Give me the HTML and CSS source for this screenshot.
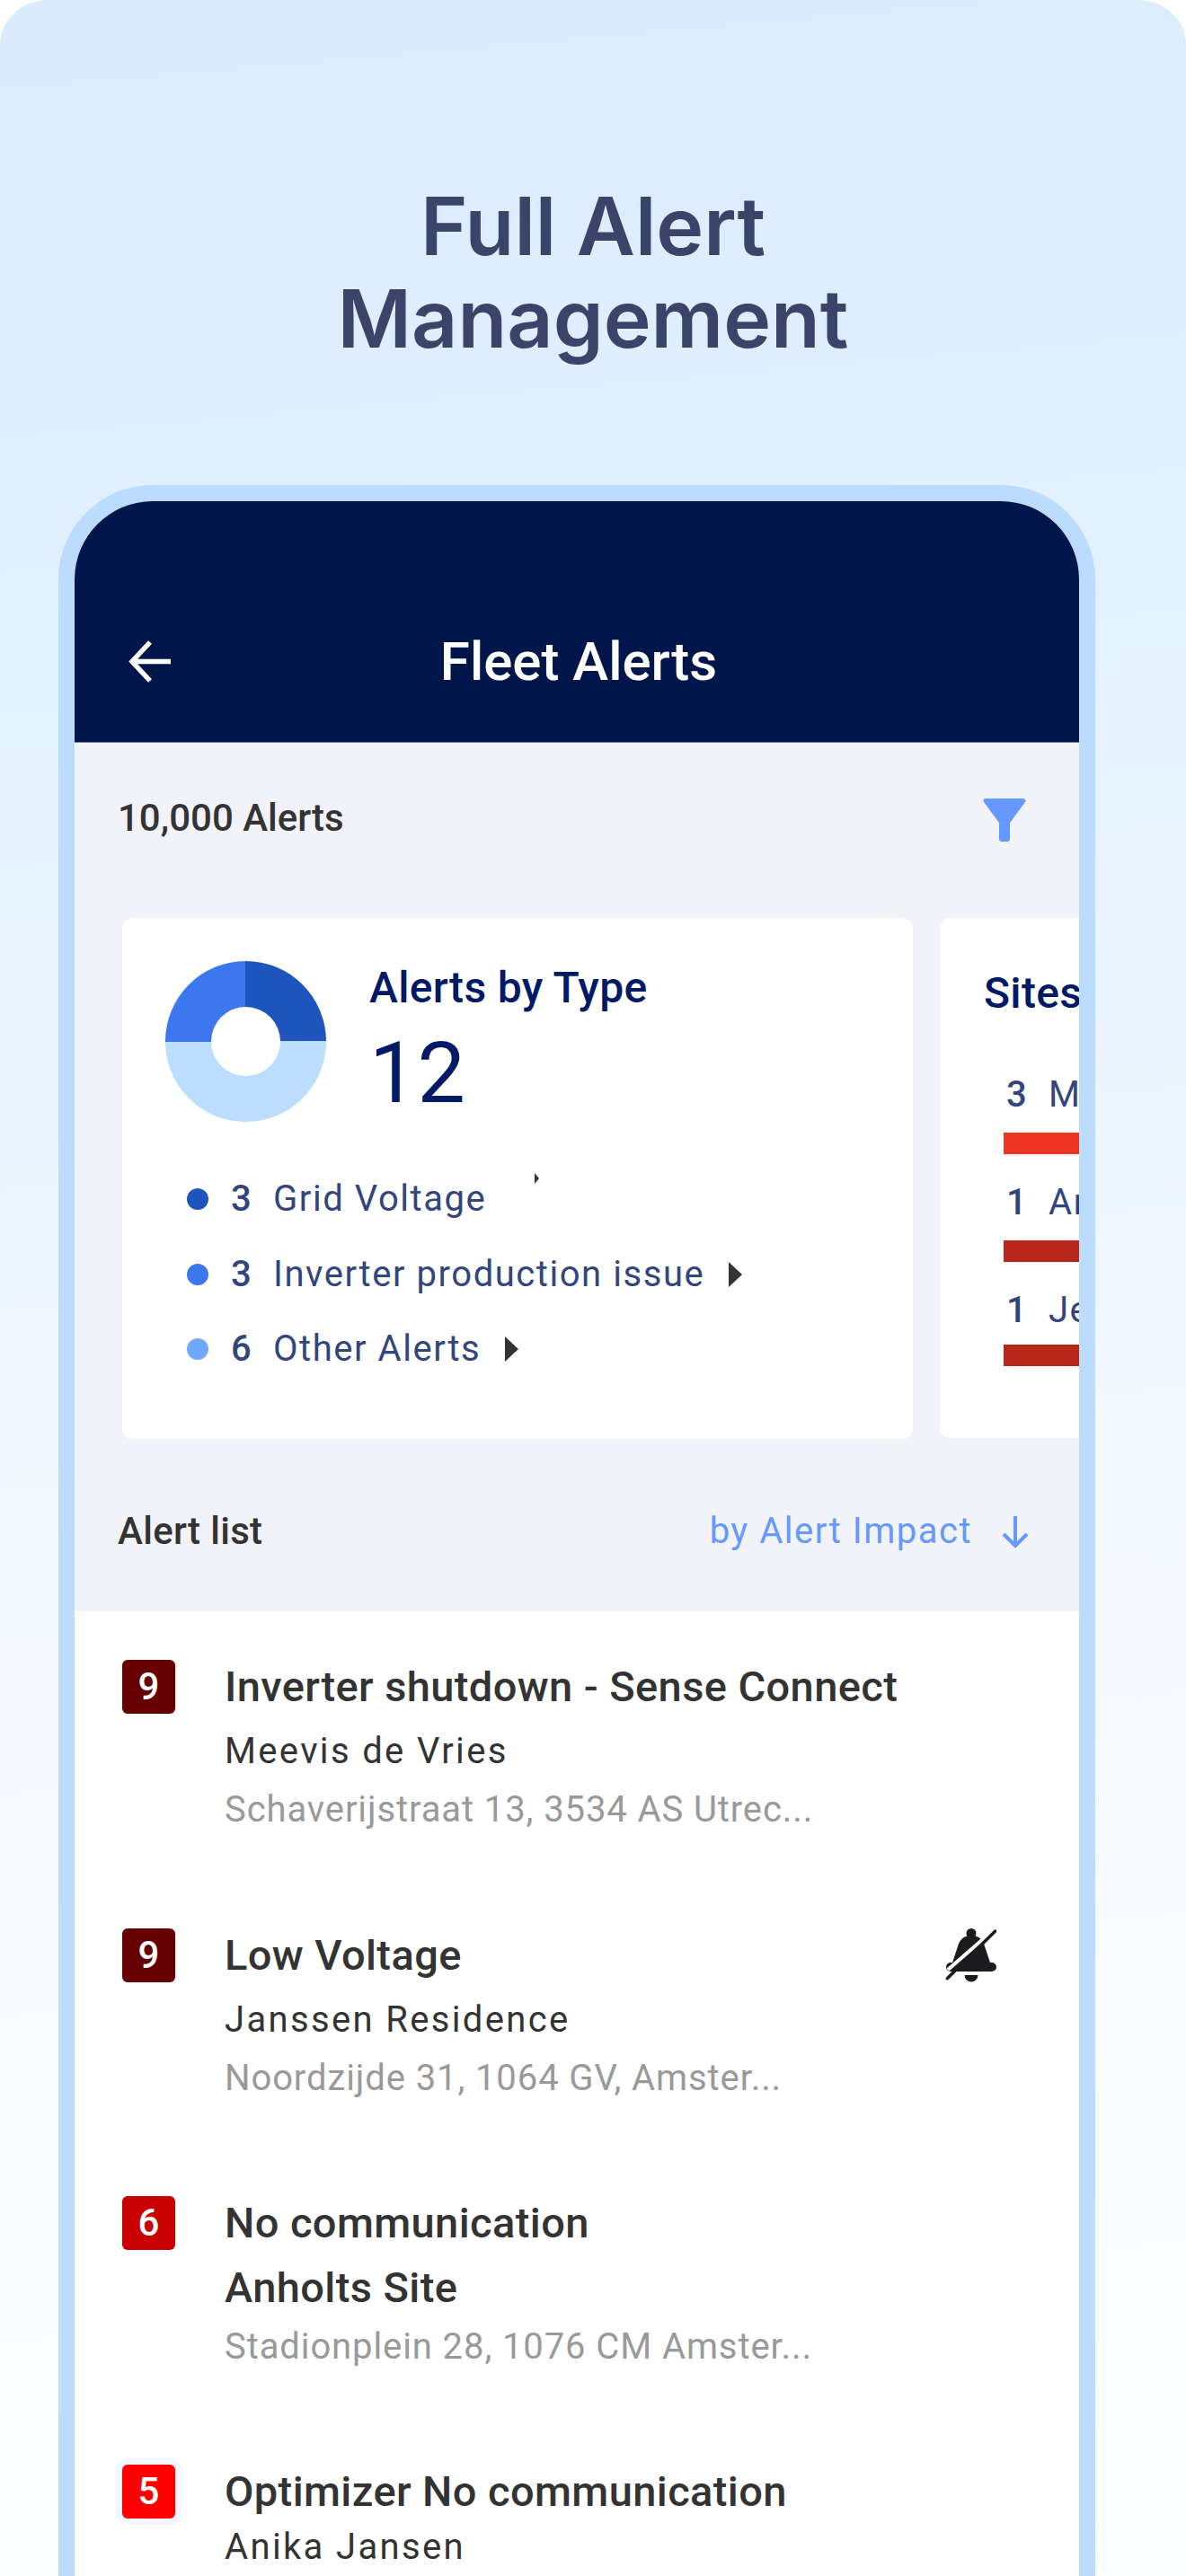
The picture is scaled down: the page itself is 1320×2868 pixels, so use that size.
FILE: index.html
```html
<!DOCTYPE html>
<html lang="en">
<head>
<meta charset="utf-8">
<title>Full Alert Management</title>
<link rel="stylesheet" href="styles.css">
</head>
<body>
<main class="page">
  <h1 class="headline">Full Alert<br>Management</h1>
  <section class="phone">
    <header class="appbar">
      <svg class="back" viewBox="0 0 47 47" aria-hidden="true"><path d="M47 23.5H4M24 2 4 23.5 24 45"/></svg>
      <div class="appbar-title">Fleet Alerts</div>
    </header>
    <div class="toolbar">
      <span class="count">10,000 Alerts</span>
      <svg class="funnel" viewBox="0 0 48 48" aria-hidden="true"><path d="M3 0H45a2.5 2.5 0 0 1 2 4L30 27V45a3 3 0 0 1-3 3H21a3 3 0 0 1-3-3V27L1 4a2.5 2.5 0 0 1 2-4Z"/></svg>
    </div>
    <div class="carousel">
      <article class="card card-type">
        <div class="card-head">
          <div class="donut"></div>
          <div class="head-text">
            <div class="card-title">Alerts by Type</div>
            <div class="big-number">12</div>
          </div>
        </div>
        <ul class="legend">
          <li class="legend-row"><span class="dot dot-a"></span><span class="num">3</span><span class="label">Grid Voltage</span></li>
          <li class="legend-row"><span class="dot dot-b"></span><span class="num">3</span><span class="label">Inverter production issue</span><span class="caret"></span></li>
          <li class="legend-row"><span class="dot dot-c"></span><span class="num">6</span><span class="label">Other Alerts</span><span class="caret"></span></li>
        </ul>
        <span class="caret-stray"></span>
      </article>
      <article class="card card-sites">
        <div class="card-title">Sites with most alerts</div>
        <div class="site-row"><div class="site-line"><span class="site-num">3</span><span class="label">Meevis de Vries</span></div><div class="bar bar-hot"></div></div>
        <div class="site-row"><div class="site-line"><span class="site-num">1</span><span class="label">Anholts Site</span></div><div class="bar"></div></div>
        <div class="site-row"><div class="site-line"><span class="site-num">1</span><span class="label">Jeroen Jansen</span></div><div class="bar"></div></div>
      </article>
    </div>
    <div class="listbar">
      <span class="count list-label">Alert list</span>
      <span class="sort">by Alert Impact</span>
      <svg class="sort-arrow" viewBox="0 0 30 36" aria-hidden="true"><path d="M15 0V33M2 20 15 33 28 20"/></svg>
    </div>
    <div class="alerts">
      <div class="alert">
        <span class="badge sev-9">9</span>
        <div class="alert-text">
          <div class="alert-title">Inverter shutdown - Sense Connect</div>
          <div class="alert-name">Meevis de Vries</div>
          <div class="alert-addr">Schaverijstraat 13, 3534 AS Utrec...</div>
        </div>
      </div>
      <div class="alert">
        <span class="badge sev-9">9</span>
        <div class="alert-text">
          <div class="alert-title">Low Voltage</div>
          <div class="alert-name">Janssen Residence</div>
          <div class="alert-addr">Noordzijde 31, 1064 GV, Amster...</div>
        </div>
        <svg class="bell" viewBox="0 0 57 60" aria-hidden="true">
          <circle cx="29" cy="5.5" r="5.5"/>
          <path d="M29 8C21 8 16 12 14 20L8 38H6a5 5 0 0 0 0 10H52a5 5 0 0 0 0-10H50L44 20C42 12 37 8 29 8Z"/>
          <path d="M21.5 52H36.500A7.500 7.500 0 0 1 21.500 52Z"/>
          <path class="bell-gap" d="M3 46 42 12"/>
          <path class="bell-slash" d="M2.300 55.700 55.700 3"/>
        </svg>
      </div>
      <div class="alert">
        <span class="badge sev-6">6</span>
        <div class="alert-text">
          <div class="alert-title">No communication</div>
          <div class="alert-title alert-title-second">Anholts Site</div>
          <div class="alert-addr alert-addr-tight">Stadionplein 28, 1076 CM Amster...</div>
        </div>
      </div>
      <div class="alert">
        <span class="badge sev-5">5</span>
        <div class="alert-text">
          <div class="alert-title">Optimizer No communication</div>
          <div class="alert-name alert-name-tight">Anika Jansen</div>
        </div>
      </div>
    </div>
  </section>
</main>
</body>
</html>
```

FILE: styles.css
```css
* { box-sizing: border-box; }
html, body { margin: 0; padding: 0; background: #fff; }
body { font-family: Roboto, "Liberation Sans", sans-serif; }

.page {
  width: 1320px;
  height: 2868px;
  overflow: hidden;
  border-radius: 54px 54px 0 0 / 50px 50px 0 0;
  background: linear-gradient(175deg, #daebff 0%, #e1f0ff 20%, #f4f9ff 58%, #fdfeff 100%);
  padding-top: 201px;
}

.headline {
  margin: 0;
  height: 339px;
  font-family: Inter, "Liberation Sans", sans-serif;
  font-weight: 600;
  font-size: 89.500px;
  line-height: 102.700px;
  color: #3b4468;
  text-align: center;
}

.phone {
  margin: 0 101px 0 65px;
  height: 2328px;
  border: 18px solid #bbdcff;
  border-bottom: 0;
  border-radius: 105px 105px 0 0;
  background: #f1f3f9;
  overflow: hidden;
}

.appbar {
  height: 269px;
  padding: 143px 0 54px 4px;
  background: #00164a;
  border-bottom: 1px solid #6f7fa6;
  display: grid;
  grid-template-columns: 1fr auto 1fr;
  align-items: center;
}
.back {
  width: 47px;
  height: 47px;
  margin-left: 56px;
  fill: none;
  stroke: #fff;
  stroke-width: 5.500;
}
.appbar-title {
  font-size: 60px;
  line-height: 70px;
  font-weight: 500;
  color: #fff;
}

.toolbar {
  height: 195px;
  padding: 59px 59px 0 48px;
  display: flex;
  justify-content: space-between;
  align-items: flex-start;
}
.count {
  font-size: 42px;
  line-height: 50px;
  font-weight: 500;
  color: #333;
}
.funnel {
  width: 48px;
  height: 48px;
  margin-top: 3px;
  fill: #6699ff;
}

.carousel {
  display: flex;
  gap: 30px;
  padding-left: 53px;
}
.card {
  position: relative;
  flex: 0 0 880px;
  height: 580px;
  background: #fff;
  border-radius: 12px;
}
.card-type { padding: 48px 0 0 48px; }
.card-sites { height: 579px; padding: 56px 0 0 49px; }
.card-head { display: flex; gap: 48px; height: 179px; }
.donut {
  position: relative;
  flex: 0 0 179px;
  height: 179px;
  border-radius: 50%;
  background: conic-gradient(#1e54bd 0 25%, #bbddff 25% 75%, #3d77ef 75% 100%);
}
.donut::after {
  content: "";
  position: absolute;
  left: 51px;
  top: 51px;
  width: 77px;
  height: 77px;
  border-radius: 50%;
  background: #fff;
}
.head-text { padding-top: 2px; }
.card-title {
  font-size: 48px;
  line-height: 56px;
  font-weight: 500;
  letter-spacing: 0.300px;
  color: #001a66;
  white-space: nowrap;
}
.big-number {
  margin-top: 12px;
  font-size: 95px;
  line-height: 110px;
  color: #001a66;
}

.legend {
  list-style: none;
  margin: 44px 0 0;
  padding: 0 0 0 24px;
}
.legend-row {
  display: flex;
  align-items: center;
  height: 83.750px;
}
.dot {
  width: 24px;
  height: 24px;
  border-radius: 50%;
  margin-right: 25px;
}
.dot-a { background: #1e54bd; }
.dot-b { background: #3d77ef; }
.dot-c { background: #70a8ff; }
.num {
  width: 47px;
  font-size: 40px;
  line-height: 48px;
  font-weight: 500;
  color: #33457d;
}
.label {
  font-size: 40px;
  line-height: 48px;
  letter-spacing: 1.550px;
  color: #33457d;
  white-space: nowrap;
}
.caret {
  width: 0;
  height: 0;
  margin-left: 27px;
  border-left: 15px solid #333;
  border-top: 14px solid transparent;
  border-bottom: 14px solid transparent;
}
.caret-stray {
  position: absolute;
  left: 459px;
  top: 284px;
  width: 0;
  height: 0;
  border-left: 5px solid #333;
  border-top: 6px solid transparent;
  border-bottom: 6px solid transparent;
}

.site-row { margin-left: 22px; }
.card-sites .card-title + .site-row { margin-top: 61px; }
.site-row + .site-row { margin-top: 30px; }
.site-line { display: flex; }
.site-num {
  width: 50px;
  font-size: 40px;
  line-height: 48px;
  font-weight: 500;
  color: #33457d;
  padding-left: 3px;
}
.bar {
  height: 24px;
  width: 400px;
  margin-top: 18px;
  background: #b8271a;
}
.bar-hot { background: #ee3524; }
.site-row:last-child .bar { margin-top: 14px; }

.listbar {
  height: 192px;
  padding: 78px 56px 0 48px;
  display: flex;
  align-items: flex-start;
}
.list-label { letter-spacing: 0.300px; margin-right: auto; }
.sort {
  margin-top: 1px;
  font-size: 40px;
  line-height: 48px;
  letter-spacing: 1.500px;
  color: #6699ff;
}
.sort-arrow {
  width: 30px;
  height: 36px;
  margin: 8px 0 0 33px;
  fill: none;
  stroke: #6699ff;
  stroke-width: 4;
}

.alerts { background: #fff; padding: 54px 0 0; height: 1300px; }
.alert {
  display: flex;
  align-items: flex-start;
  height: 298.500px;
  padding: 0 92px 0 53px;
}
.badge {
  flex: 0 0 59px;
  height: 60px;
  margin-right: 55px;
  border-radius: 6px;
  color: #fff;
  font-size: 42px;
  font-weight: 500;
  line-height: 60px;
  text-align: center;
}
.sev-9 { background: #660000; }
.sev-6 { background: #c80000; }
.sev-5 { background: #ff0000; box-shadow: 0 0 0 7px #f4f7ff; }

.alert-text { padding-top: 3px; }
.alert-title {
  font-size: 47px;
  line-height: 54px;
  font-weight: 500;
  letter-spacing: 0.400px;
  color: #333;
  white-space: nowrap;
}
.alert-title-second { margin-top: 18px; }
.alert-name {
  margin-top: 21px;
  font-size: 40px;
  line-height: 48px;
  letter-spacing: 2.350px;
  color: #333;
  white-space: nowrap;
}
.alert-name-tight { margin-top: 11px; }
.alert-addr {
  margin-top: 17px;
  font-size: 40px;
  line-height: 48px;
  letter-spacing: 0.900px;
  color: #999;
  white-space: nowrap;
}
.alert-addr-tight { margin-top: 15px; }

.bell {
  flex: 0 0 57px;
  width: 57px;
  height: 60px;
  margin-left: auto;
  fill: #1c1c1e;
}
.bell-gap { fill: none; stroke: #fff; stroke-width: 4; }
.bell-slash { fill: none; stroke: #1c1c1e; stroke-width: 3.500; stroke-linecap: round; }
```
